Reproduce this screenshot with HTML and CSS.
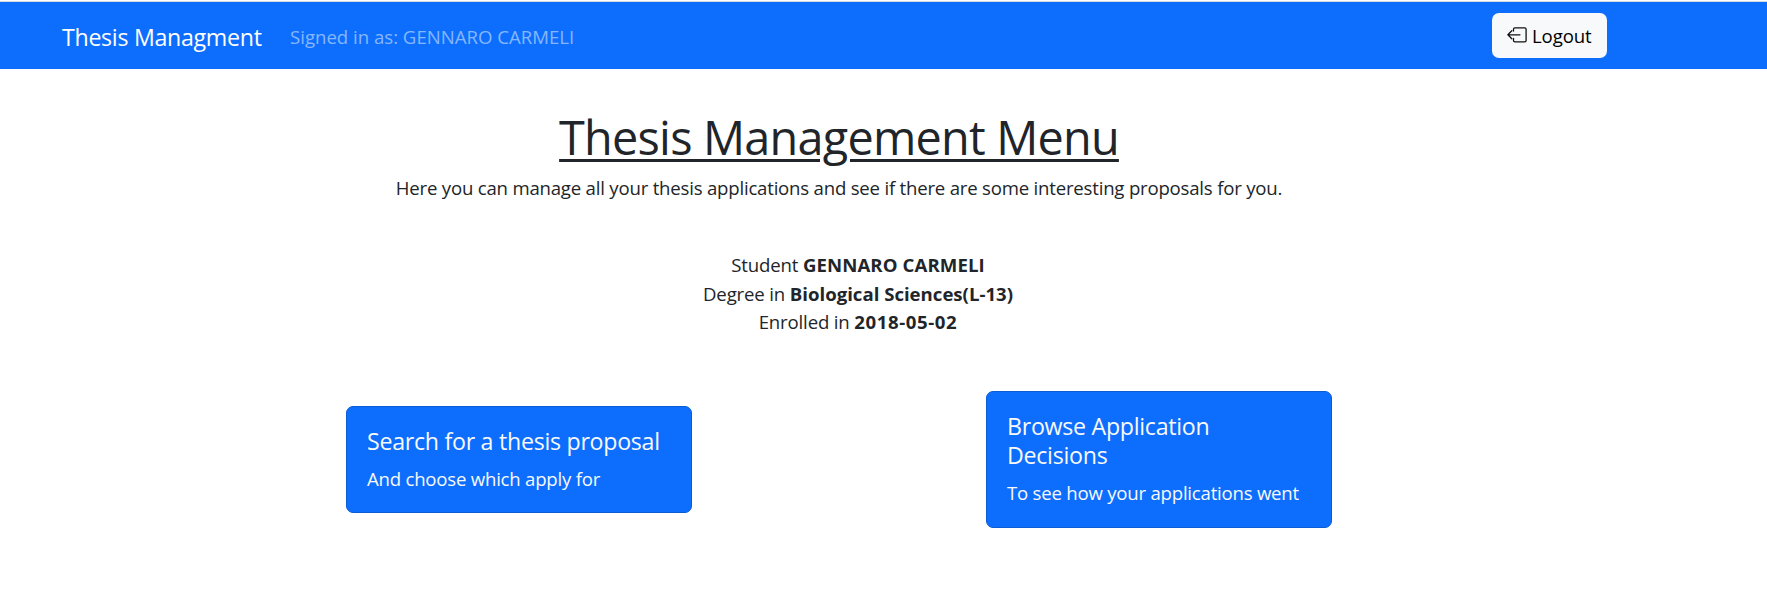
FILE: index.html
```html
<!DOCTYPE html>
<html lang="en">
<head>
<meta charset="utf-8">
<title>Thesis Management</title>
<link rel="stylesheet" href="styles.css">
</head>
<body>
<nav class="navbar">
  <a class="brand">Thesis Managment</a>
  <span class="signed">Signed in as: GENNARO CARMELI</span>
  <button class="logout">
    <svg class="logout-icon" viewBox="0 0 20 20" fill="none" stroke="#111" stroke-width="1.3" stroke-linecap="round" stroke-linejoin="round"><path d="M6.5 6V4.2Q6.5 2.8 7.9 2.8H17.7Q19.1 2.8 19.1 4.2V15.4Q19.1 16.8 17.7 16.8H7.9Q6.5 16.8 6.5 15.4V13.5"/><path d="M13 9.8H1M4.8 5.8L.9 9.8l3.9 4"/></svg>
    <span class="logout-label">Logout</span>
  </button>
</nav>
<main class="content">
  <h1 class="title">Thesis Management Menu</h1>
  <p class="intro">Here you can manage all your thesis applications and see if there are some interesting proposals for you.</p>
  <div class="details">
    <div class="student">Student <b>GENNARO CARMELI</b></div>
    <div class="degree">Degree in <b>Biological Sciences(L-13)</b></div>
    <div class="enrolled">Enrolled in <b>2018-05-02</b></div>
  </div>
  <div class="cards">
    <section class="card">
      <h2 class="card-title">Search for a thesis proposal</h2>
      <p class="card-text">And choose which apply for</p>
    </section>
    <section class="card">
      <h2 class="card-title">Browse Application<br>Decisions</h2>
      <p class="card-text">To see how your applications went</p>
    </section>
  </div>
</main>
</body>
</html>
```
FILE: styles.css
```css
* { box-sizing: border-box; }
body {
  margin: 0;
  background: #fff;
  color: #212529;
  font: 18.6px/28.8px "Open Sans", "Noto Sans", sans-serif;
  white-space: nowrap;
  overflow: hidden;
}
h1, h2, p { margin: 0; font-weight: 400; }
.navbar {
  display: flex;
  align-items: center;
  height: 69px;
  padding: 2px 160px 0 62px;
  background: #0d6efd;
  border-top: 1px solid #fff;
  box-shadow: inset 0 1px #d5d9df;
}
.brand { width: 228px; padding-top: 2px; color: #fff; font-size: 23.2px; letter-spacing: -.3px; }
.signed { padding-top: 2px; color: #86b7fe; }
.logout {
  display: flex;
  align-items: center;
  gap: 5px;
  width: 115px;
  height: 45px;
  margin: 0 0 2px auto;
  padding: 2px 14px 0;
  border: 0;
  border-radius: 7px;
  background: #f8f9fa;
  color: #000;
  font: inherit;
}
.logout-icon { width: 20px; height: 20px; margin: 0 0 2px 1px; flex: none; }
.logout-label { letter-spacing: -.1px; }
.content {
  display: flex;
  flex-direction: column;
  align-items: center;
  width: 1678px;
  padding-top: 39px;
}
.title {
  font-size: 46.8px;
  line-height: 58px;
  letter-spacing: -.77px;
  text-decoration: underline;
  text-decoration-thickness: 3px;
  text-underline-offset: 4px;
}
.intro { margin-top: 8px; letter-spacing: -.205px; }
.details { margin: 48px 0 0 38px; text-align: center; letter-spacing: -.15px; }
.student b { letter-spacing: .1px; }
.degree b { letter-spacing: 0; }
.enrolled b { letter-spacing: .6px; }
.cards {
  display: flex;
  align-items: center;
  gap: 294px;
  margin-top: 54px;
}
.card {
  width: 346px;
  padding: 20px 20px 18.4px;
  border: 1px solid #0b5cd5;
  border-radius: 7px;
  background: #0d6efd;
  color: #f8f9fa;
}
.card-title { margin-bottom: 9.6px; font-size: 23.2px; line-height: 28.8px; letter-spacing: -.28px; }
.card-text { letter-spacing: -.22px; }
```
